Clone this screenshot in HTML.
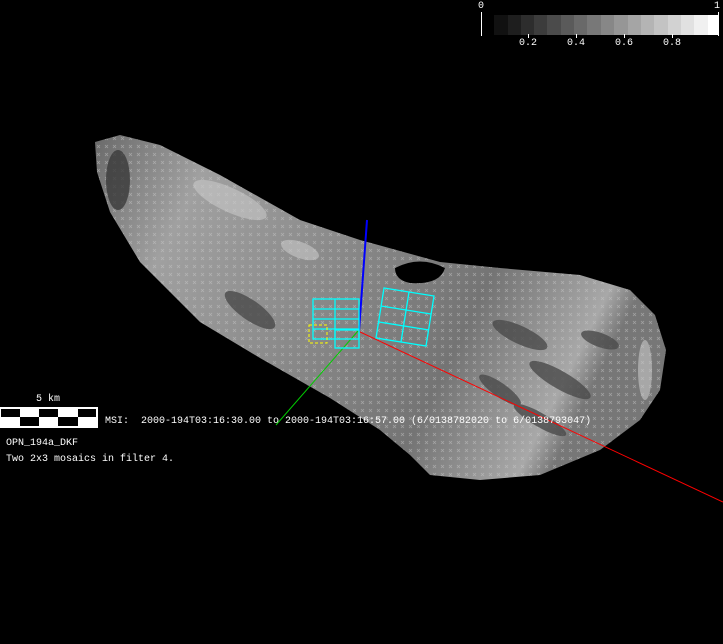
<!DOCTYPE html>
<html><head><meta charset="utf-8"><style>
html,body{margin:0;padding:0;background:#000;width:723px;height:644px;overflow:hidden}
.t{position:absolute;color:#fff;font-family:"Liberation Mono",monospace;font-size:10px;line-height:12px;white-space:pre}
</style></head><body>
<svg width="723" height="644" style="position:absolute;left:0;top:0">
<defs>
<linearGradient id="g" x1="0" y1="0" x2="1" y2="0.3">
<stop offset="0" stop-color="#6a6a6a"/><stop offset="0.2" stop-color="#a0a0a0"/>
<stop offset="0.45" stop-color="#8c8c8c"/><stop offset="0.75" stop-color="#747474"/>
<stop offset="0.95" stop-color="#a8a8a8"/><stop offset="1" stop-color="#777"/></linearGradient>
<pattern id="p" width="8" height="8" patternUnits="userSpaceOnUse"><path d="M1 1l3 3M4 1l-3 3" stroke="#ccc" stroke-width="0.8" opacity="0.5"/></pattern>
</defs>
<g id="b">
<path d="M95 142 L120 135 L160 145 L220 175 L300 220 L360 240 L440 262 L500 268 L580 275 L630 290 L655 315 L666 350 L660 390 L640 420 L600 450 L540 475 L480 480 L430 475 L410 455 L380 430 L330 398 L260 358 L200 322 L140 262 L110 212 L97 172 Z" fill="url(#g)"/>
</g>
<path d="M95 142 L120 135 L160 145 L220 175 L300 220 L360 240 L440 262 L500 268 L580 275 L630 290 L655 315 L666 350 L660 390 L640 420 L600 450 L540 475 L480 480 L430 475 L410 455 L380 430 L330 398 L260 358 L200 322 L140 262 L110 212 L97 172 Z" fill="url(#p)"/>
<g fill="#4a4a4a" opacity="0.8">
<ellipse cx="520" cy="335" rx="30" ry="9" transform="rotate(25 520 335)"/>
<ellipse cx="560" cy="380" rx="35" ry="9" transform="rotate(30 560 380)"/>
<ellipse cx="500" cy="390" rx="25" ry="7" transform="rotate(35 500 390)"/>
<ellipse cx="600" cy="340" rx="20" ry="7" transform="rotate(20 600 340)"/>
<ellipse cx="540" cy="420" rx="30" ry="7" transform="rotate(30 540 420)"/>
<ellipse cx="118" cy="180" rx="12" ry="30" fill="#3a3a3a"/>
<ellipse cx="250" cy="310" rx="30" ry="10" transform="rotate(35 250 310)"/>
</g>
<g fill="#c8c8c8" opacity="0.6">
<ellipse cx="230" cy="200" rx="40" ry="12" transform="rotate(25 230 200)"/>
<ellipse cx="645" cy="370" rx="7" ry="30"/>
<ellipse cx="300" cy="250" rx="20" ry="8" transform="rotate(20 300 250)"/>
</g>
<path d="M395 268 Q420 255 445 268 Q440 285 410 283 Q395 280 395 268Z" fill="#000"/>
<line x1="367" y1="220" x2="359" y2="331" stroke="#00f" stroke-width="2"/>
<line x1="358" y1="331" x2="723" y2="502" stroke="#f00" stroke-width="1"/>
<line x1="358" y1="331" x2="276" y2="425" stroke="#0c0" stroke-width="1"/>
<g stroke="#0ff" stroke-width="1.3" fill="none">
<rect x="313" y="299" width="46" height="40"/>
<line x1="313" y1="309" x2="359" y2="309"/><line x1="313" y1="319" x2="359" y2="319"/><line x1="313" y1="329" x2="359" y2="329"/>
<line x1="335" y1="299" x2="335" y2="339"/><rect x="335" y="330" width="24" height="18"/>
<path d="M384 288 L434 296 L426 346 L376 338 Z"/>
<path d="M381 306 L431 314 M379 322 L429 330 M409 292 L401 342"/>
</g>
<rect x="309" y="325" width="18" height="18" fill="none" stroke="#ff0" stroke-dasharray="3 2"/>
<rect x="481" y="12" width="1" height="24" fill="#fff"/>
<rect x="718" y="12" width="1" height="24" fill="#fff"/>
<g>
<rect x="494" y="15" width="14" height="20" fill="#111"/><rect x="508" y="15" width="14" height="20" fill="#1e1e1e"/>
<rect x="521" y="15" width="14" height="20" fill="#2d2d2d"/><rect x="534" y="15" width="14" height="20" fill="#3c3c3c"/>
<rect x="547" y="15" width="14" height="20" fill="#4b4b4b"/><rect x="561" y="15" width="14" height="20" fill="#5a5a5a"/>
<rect x="574" y="15" width="14" height="20" fill="#696969"/><rect x="587" y="15" width="14" height="20" fill="#787878"/>
<rect x="601" y="15" width="14" height="20" fill="#878787"/><rect x="614" y="15" width="14" height="20" fill="#969696"/>
<rect x="628" y="15" width="14" height="20" fill="#a5a5a5"/><rect x="641" y="15" width="14" height="20" fill="#b4b4b4"/>
<rect x="654" y="15" width="14" height="20" fill="#c3c3c3"/><rect x="668" y="15" width="14" height="20" fill="#d2d2d2"/>
<rect x="681" y="15" width="14" height="20" fill="#e1e1e1"/><rect x="694" y="15" width="14" height="20" fill="#f0f0f0"/>
<rect x="708" y="15" width="11" height="20" fill="#fff"/>
</g>
<g fill="#fff"><rect x="528" y="34" width="1" height="4"/><rect x="576" y="34" width="1" height="4"/><rect x="624" y="34" width="1" height="4"/><rect x="672" y="34" width="1" height="4"/></g>
<rect x="0" y="407" width="98" height="21" fill="#fff"/>
<g fill="#000"><rect x="1" y="409" width="19" height="8"/><rect x="39" y="409" width="19" height="8"/><rect x="78" y="409" width="18" height="8"/>
<rect x="20" y="417" width="19" height="9"/><rect x="58" y="417" width="20" height="9"/></g>
</svg>
<div class="t" style="left:478px;top:1px">0</div>
<div class="t" style="left:714px;top:1px">1</div>
<div class="t" style="left:519px;top:38px">0.2</div>
<div class="t" style="left:567px;top:38px">0.4</div>
<div class="t" style="left:615px;top:38px">0.6</div>
<div class="t" style="left:663px;top:38px">0.8</div>
<div class="t" style="left:36px;top:394px">5 km</div>
<div class="t" style="left:105px;top:416px">MSI:  2000-194T03:16:30.00 to 2000-194T03:16:57.00 (6/0138782020 to 6/0138793047)</div>
<div class="t" style="left:6px;top:438px">OPN_194a_DKF</div>
<div class="t" style="left:6px;top:454px">Two 2x3 mosaics in filter 4.</div>
</body></html>
